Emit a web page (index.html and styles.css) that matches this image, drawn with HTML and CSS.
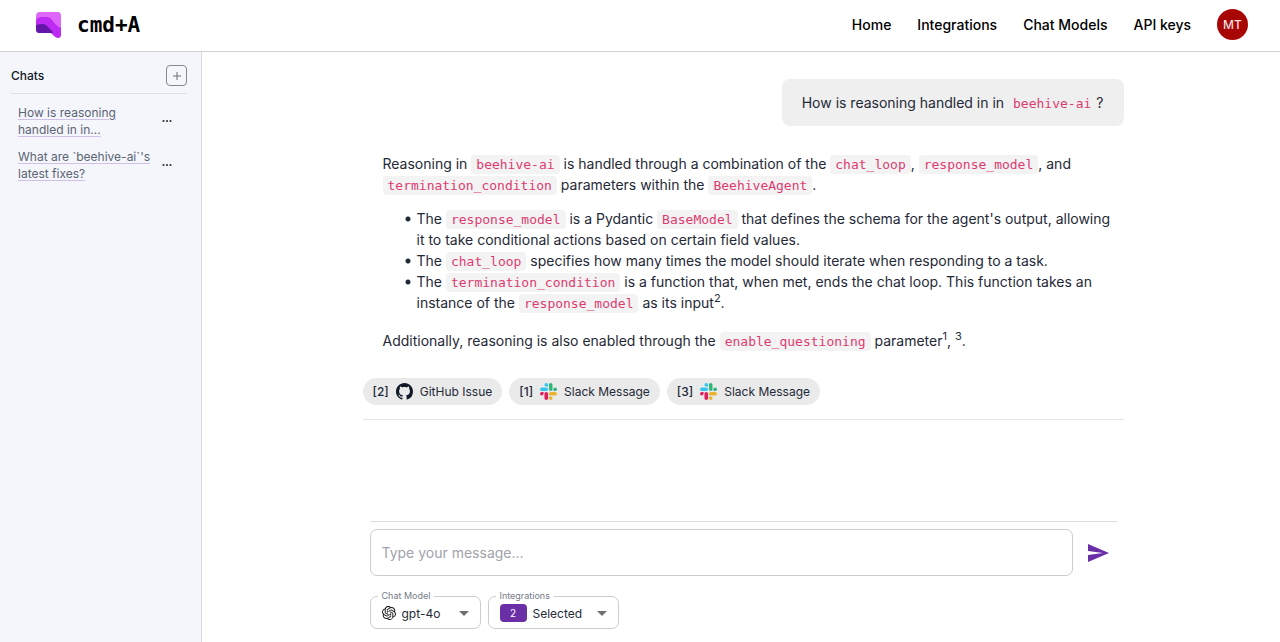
FILE: index.html
```html
<!DOCTYPE html>
<html lang="en">
<head>
<meta charset="utf-8">
<meta name="viewport" content="width=device-width, initial-scale=1">
<title>cmd+A</title>
<link rel="stylesheet" href="styles.css">
</head>
<body>
<svg class="sprite" aria-hidden="true">
  <symbol id="slack" viewBox="0 0 24 24">
    <path fill="#e01e5a" d="M5.042 15.165a2.528 2.528 0 0 1-2.52 2.523A2.528 2.528 0 0 1 0 15.165a2.527 2.527 0 0 1 2.522-2.52h2.52v2.52zM6.313 15.165a2.527 2.527 0 0 1 2.521-2.52 2.527 2.527 0 0 1 2.521 2.52v6.313A2.528 2.528 0 0 1 8.834 24a2.528 2.528 0 0 1-2.521-2.522v-6.313z"/>
    <path fill="#36c5f0" d="M8.834 5.042a2.528 2.528 0 0 1-2.521-2.52A2.528 2.528 0 0 1 8.834 0a2.528 2.528 0 0 1 2.521 2.522v2.52H8.834zM8.834 6.313a2.528 2.528 0 0 1 2.521 2.521 2.528 2.528 0 0 1-2.521 2.521H2.522A2.528 2.528 0 0 1 0 8.834a2.528 2.528 0 0 1 2.522-2.521h6.312z"/>
    <path fill="#2eb67d" d="M18.956 8.834a2.528 2.528 0 0 1 2.522-2.521A2.528 2.528 0 0 1 24 8.834a2.528 2.528 0 0 1-2.522 2.521h-2.522V8.834zM17.688 8.834a2.528 2.528 0 0 1-2.523 2.521 2.527 2.527 0 0 1-2.52-2.521V2.522A2.527 2.527 0 0 1 15.165 0a2.528 2.528 0 0 1 2.523 2.522v6.312z"/>
    <path fill="#ecb22e" d="M15.165 18.956a2.528 2.528 0 0 1 2.523 2.522A2.528 2.528 0 0 1 15.165 24a2.527 2.527 0 0 1-2.52-2.522v-2.522h2.52zM15.165 17.688a2.527 2.527 0 0 1-2.52-2.523 2.526 2.526 0 0 1 2.52-2.52h6.313A2.527 2.527 0 0 1 24 15.165a2.528 2.528 0 0 1-2.522 2.523h-6.313z"/>
  </symbol>
</svg>
<header class="topbar">
  <a class="brand" href="#">
    <svg class="brand-logo" viewBox="0 0 26 26" aria-hidden="true">
      <path fill="#df66fb" d="M4 0H22Q25 0 25 4V17L14 12L0 8V4Q0 0 4 0Z"/>
      <path fill="#bd2bf2" d="M0 8Q2 5 6 5H11Q14 5 16 8Q19 13 25 16V23Q25 26 22 26Q20 26 18 24L12 18L0 16Z"/>
      <path fill="#6316a8" d="M0 13Q3 12 7 12Q10 12 12 15L17 20Q17 21 15 21H3Q0 21 0 18Z"/>
    </svg>
    <span class="brand-name">cmd+A</span>
  </a>
  <nav class="nav">
    <a href="#">Home</a>
    <a href="#">Integrations</a>
    <a href="#">Chat Models</a>
    <a href="#">API keys</a>
    <button class="avatar" type="button">MT</button>
  </nav>
</header>
<div class="layout">
  <aside class="sidebar">
    <div class="sidebar-head">
      <h2>Chats</h2>
      <button class="add" type="button" aria-label="New chat">
        <svg viewBox="0 0 10 10" aria-hidden="true"><path d="M5 1V9M1 5H9"/></svg>
      </button>
    </div>
    <ul class="chats">
      <li>
        <a href="#">How is reasoning handled in in...</a>
        <button class="more" type="button" aria-label="Chat options"><svg viewBox="0 0 10 4" aria-hidden="true"><circle cx="1.5" cy="2" r="1.1"/><circle cx="5" cy="2" r="1.1"/><circle cx="8.5" cy="2" r="1.1"/></svg></button>
      </li>
      <li>
        <a href="#">What are `beehive-ai`'s latest fixes?</a>
        <button class="more" type="button" aria-label="Chat options"><svg viewBox="0 0 10 4" aria-hidden="true"><circle cx="1.5" cy="2" r="1.1"/><circle cx="5" cy="2" r="1.1"/><circle cx="8.5" cy="2" r="1.1"/></svg></button>
      </li>
    </ul>
  </aside>
  <main class="main">
    <section class="thread">
      <p class="question">How is reasoning handled in in <code>beehive-ai</code>?</p>
      <article class="answer">
        <p>Reasoning in <code>beehive-ai</code> is handled through a combination of the <code>chat_loop</code>, <code>response_model</code>, and <code>termination_condition</code> parameters within the <code>BeehiveAgent</code>.</p>
        <ul>
          <li>The <code>response_model</code> is a Pydantic <code>BaseModel</code> that defines the schema for the agent's output, allowing it to take conditional actions based on certain field values.</li>
          <li>The <code>chat_loop</code> specifies how many times the model should iterate when responding to a task.</li>
          <li>The <code>termination_condition</code> is a function that, when met, ends the chat loop. This function takes an instance of the <code>response_model</code> as its input<sup>2</sup>.</li>
        </ul>
        <p>Additionally, reasoning is also enabled through the <code>enable_questioning</code> parameter<sup>1</sup>, <sup>3</sup>.</p>
      </article>
      <div class="sources">
        <a class="chip" href="#"><b>[2]</b>
          <svg viewBox="0 0 16 16" aria-hidden="true"><path fill="#111827" d="M8 0C3.58 0 0 3.58 0 8c0 3.54 2.29 6.53 5.47 7.59.4.07.55-.17.55-.38 0-.19-.01-.82-.01-1.49-2.01.37-2.53-.49-2.69-.94-.09-.23-.48-.94-.82-1.13-.28-.15-.68-.52-.01-.53.63-.01 1.08.58 1.23.82.72 1.21 1.87.87 2.33.66.07-.52.28-.87.51-1.07-1.78-.2-3.64-.89-3.64-3.95 0-.87.31-1.59.82-2.15-.08-.2-.36-1.02.08-2.12 0 0 .67-.21 2.2.82.64-.18 1.32-.27 2-.27s1.36.09 2 .27c1.53-1.04 2.2-.82 2.2-.82.44 1.1.16 1.92.08 2.12.51.56.82 1.27.82 2.15 0 3.07-1.87 3.75-3.65 3.95.29.25.54.73.54 1.48 0 1.07-.01 1.93-.01 2.2 0 .21.15.46.55.38A8.01 8.01 0 0 0 16 8c0-4.42-3.58-8-8-8z"/></svg>
          <span>GitHub Issue</span></a>
        <a class="chip" href="#"><b>[1]</b><svg aria-hidden="true"><use href="#slack"/></svg><span>Slack Message</span></a>
        <a class="chip" href="#"><b>[3]</b><svg aria-hidden="true"><use href="#slack"/></svg><span>Slack Message</span></a>
      </div>
    </section>
    <form class="composer">
      <div class="compose-row">
        <input class="message" type="text" placeholder="Type your message..." aria-label="Message">
        <button class="send" type="button" aria-label="Send"><svg viewBox="0 0 24 24" aria-hidden="true"><path d="M2.01 21 23 12 2.01 3 2 10l15 2-15 2z"/></svg></button>
      </div>
      <div class="options">
        <fieldset class="field">
          <legend><label for="model">Chat Model</label></legend>
          <div class="field-body">
            <svg class="openai" viewBox="0 0 24 24" aria-hidden="true"><path d="M22.2819 9.8211a5.9847 5.9847 0 0 0-.5157-4.9108 6.0462 6.0462 0 0 0-6.5098-2.9A6.0651 6.0651 0 0 0 4.9807 4.1818a5.9847 5.9847 0 0 0-3.9977 2.9 6.0462 6.0462 0 0 0 .7427 7.0966 5.98 5.98 0 0 0 .511 4.9107 6.051 6.051 0 0 0 6.5146 2.9001A5.9847 5.9847 0 0 0 13.2599 24a6.0557 6.0557 0 0 0 5.7718-4.2058 5.9894 5.9894 0 0 0 3.9977-2.9001 6.0557 6.0557 0 0 0-.7475-7.0729zm-9.022 12.6081a4.4755 4.4755 0 0 1-2.8764-1.0408l.1419-.0804 4.7783-2.7582a.7948.7948 0 0 0 .3927-.6813v-6.7369l2.02 1.1686a.071.071 0 0 1 .038.052v5.5826a4.504 4.504 0 0 1-4.4945 4.4944zm-9.6607-4.1254a4.4708 4.4708 0 0 1-.5346-3.0137l.142.0852 4.783 2.7582a.7712.7712 0 0 0 .7806 0l5.8428-3.3685v2.3324a.0804.0804 0 0 1-.0332.0615L9.74 19.9502a4.4992 4.4992 0 0 1-6.1408-1.6464zM2.3408 7.8956a4.485 4.485 0 0 1 2.3655-1.9728V11.6a.7664.7664 0 0 0 .3879.6765l5.8144 3.3543-2.0201 1.1685a.0757.0757 0 0 1-.071 0l-4.8303-2.7865A4.504 4.504 0 0 1 2.3408 7.872zm16.5963 3.8558L13.1038 8.364 15.1192 7.2a.0757.0757 0 0 1 .071 0l4.8303 2.7913a4.4944 4.4944 0 0 1-.6765 8.1042v-5.6772a.79.79 0 0 0-.407-.667zm2.0107-3.0231l-.142-.0852-4.7735-2.7818a.7759.7759 0 0 0-.7854 0L9.409 9.2297V6.8974a.0662.0662 0 0 1 .0284-.0615l4.8303-2.7866a4.4992 4.4992 0 0 1 6.6802 4.66zM8.3065 12.863l-2.02-1.1638a.0804.0804 0 0 1-.038-.0567V6.0742a4.4992 4.4992 0 0 1 7.3757-3.4537l-.142.0805L8.704 5.459a.7948.7948 0 0 0-.3927.6813zm1.0976-2.3654l2.602-1.4998 2.6069 1.4998v2.9994l-2.5974 1.4997-2.6067-1.4997Z"/></svg>
            <select id="model" class="select-model"><option>gpt-4o</option></select>
            <svg class="caret" viewBox="0 0 10 5" aria-hidden="true"><path d="M0 0H10L5 5Z"/></svg>
          </div>
        </fieldset>
        <fieldset class="field">
          <legend><label for="integrations">Integrations</label></legend>
          <div class="field-body">
            <span class="count">2</span>
            <select id="integrations" class="select-int"><option>Selected</option></select>
            <svg class="caret" viewBox="0 0 10 5" aria-hidden="true"><path d="M0 0H10L5 5Z"/></svg>
          </div>
        </fieldset>
      </div>
    </form>
  </main>
</div>
</body>
</html>
```
FILE: styles.css
```css
* { box-sizing: border-box; }

body {
  margin: 0;
  min-height: 100vh;
  display: flex;
  flex-direction: column;
  font-family: Inter, "Liberation Sans", sans-serif;
  font-size: 14px;
  line-height: 21px;
  color: #1f2937;
  background: #fff;
}

a { color: inherit; text-decoration: none; }
button { font: inherit; padding: 0; border: 0; background: none; cursor: pointer; }
.sprite { display: none; }

.topbar {
  height: 52px;
  padding: 0 32px 2px 36px;
  display: flex;
  align-items: center;
  justify-content: space-between;
  border-bottom: 1px solid #d4d4d4;
}
.brand { display: flex; align-items: center; gap: 15px; color: #000; }
.brand-logo { width: 26px; height: 26px; }
.brand-name { font: bold 21px/24px "DejaVu Sans Mono", monospace; }
.nav { display: flex; align-items: center; gap: 26px; font-weight: 500; color: #000; }
.avatar {
  width: 31px;
  height: 31px;
  border-radius: 50%;
  background: #a80505;
  color: #f3dede;
  font-size: 12px;
}

.layout { flex: 1; display: flex; }
.sidebar {
  width: 202px;
  flex: none;
  padding: 13px 14px 0 11px;
  background: #f4f6fb;
  border-right: 1px solid #d9dbe0;
}
.sidebar-head {
  display: flex;
  align-items: center;
  justify-content: space-between;
  padding-bottom: 7px;
  border-bottom: 1px solid #dddfe4;
}
.sidebar-head h2 { margin: 0; font-size: 12px; font-weight: 500; color: #111827; }
.add {
  width: 21px;
  height: 21px;
  border: 1px solid #86898e;
  border-radius: 4px;
  display: grid;
  place-items: center;
}
.add svg { width: 10px; height: 10px; stroke: #6b6f76; fill: none; }
.chats {
  list-style: none;
  margin: 0;
  padding: 10px 14px 0 7px;
  display: flex;
  flex-direction: column;
  gap: 10px;
  font-size: 12px;
  line-height: 17px;
  color: #5b6474;
}
.chats li { display: flex; align-items: center; justify-content: space-between; gap: 6px; }
.chats a { text-decoration: underline; text-decoration-color: #cfc0e6; text-underline-offset: 2px; }
.more { width: 12px; height: 16px; flex: none; display: grid; place-items: center; }
.more svg { width: 10px; height: 4px; fill: #333; }

.main {
  flex: 1;
  min-width: 0;
  padding: 27px 16px 13px 20px;
  display: flex;
  flex-direction: column;
  align-items: center;
}
.thread, .composer { width: 100%; max-width: 761px; }
.thread { display: flex; flex-direction: column; border-bottom: 1px solid #e5e5e5; padding-bottom: 14px; }
code {
  font: 13px/16px "DejaVu Sans Mono", monospace;
  color: #dd3b70;
  background: #f3f3f3;
  padding: 2px 5px;
  border-radius: 4px;
}
.question {
  align-self: flex-end;
  margin: 0;
  padding: 13px 20px;
  border-radius: 8px;
  background: #efefef;
}
.question code { background: none; }
.answer { padding: 27px 4px 27px 20px; }
.answer p { margin: 0; }
.answer ul { list-style: none; margin: 13px 0 17px; padding-left: 22px; }
.answer li {
  padding-left: 12px;
  background: radial-gradient(circle at 3px 11px, #1f2937 2px, transparent 3px) no-repeat;
}
.answer sup { font-size: 11px; line-height: 12px; }

.sources { display: flex; flex-wrap: wrap; gap: 7px; }
.chip {
  display: flex;
  align-items: center;
  gap: 7px;
  height: 27px;
  padding: 0 10px;
  border-radius: 14px;
  background: #eaeaea;
  font-size: 12px;
}
.chip b { font-weight: 500; }
.chip svg { width: 17px; height: 17px; }

.composer { margin-top: auto; padding: 0 7px; }
.compose-row {
  display: flex;
  align-items: center;
  gap: 13px;
  padding-top: 7px;
  border-top: 1px solid #ddd;
}
.message {
  flex: 1;
  min-width: 0;
  height: 47px;
  padding: 0 11px;
  border: 1px solid #ccc;
  border-radius: 7px;
  font: inherit;
  color: inherit;
  background: #fff;
}
.message::placeholder { color: #a0a3ab; opacity: 1; }
.send { width: 31px; height: 31px; display: grid; place-items: center start; }
.send svg { width: 24px; height: 24px; fill: #6a2ea6; }

.options { display: flex; gap: 7px; padding-top: 13px; }
.field {
  margin: 0;
  min-width: 0;
  height: 40px;
  padding: 0 11px;
  border: 1px solid #ccc;
  border-radius: 7px;
}
.field legend {
  padding: 0 4px;
  margin-left: -4px;
  font-size: 9px;
  line-height: 14px;
  color: #757b87;
}
.field-body { display: flex; align-items: center; height: 20px; }
.field select {
  appearance: none;
  border: 0;
  padding: 0;
  margin: 0 0 0 6px;
  background: none;
  font: inherit;
  font-size: 12px;
  color: inherit;
}
.select-model { width: 57px; }
.select-int { width: 64px; }
.openai { width: 14px; height: 14px; fill: #111; }
.caret { width: 10px; height: 5px; fill: #6f6f6f; pointer-events: none; }
.count {
  width: 27px;
  height: 18px;
  border-radius: 4px;
  background: #6a2ea6;
  color: #fff;
  font-size: 10px;
  line-height: 18px;
  text-align: center;
}
```
